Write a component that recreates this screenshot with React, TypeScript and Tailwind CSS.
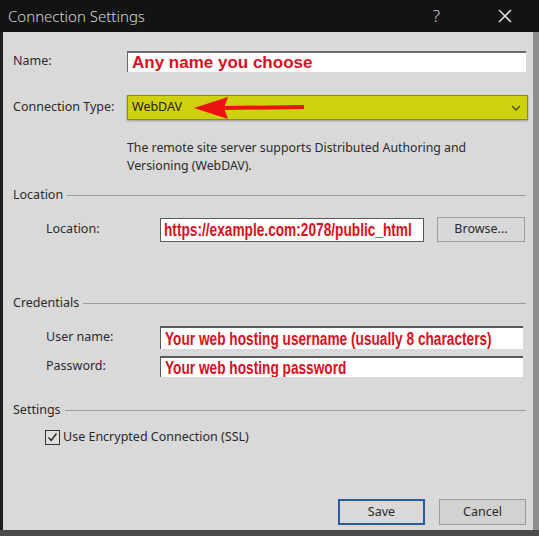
import React from 'react';

const ui = { fontFamily: '"Noto Sans", "Open Sans", sans-serif' };
const red = { fontFamily: '"Liberation Sans", Arial, sans-serif' };

const Legend: React.FC<{ title: string; className?: string }> = ({ title, className }) => (
    <div className={`flex items-center h-[18px] ${className ?? ''}`}>
        <span className="text-[12.5px] text-[#2a2a2a] pr-[4px]">{title}</span>
        <div className="flex-1 h-px bg-[#9c9c9c]" />
    </div>
);

// red annotation text typed over the fields, set narrow like Arial Narrow Bold
const Narrow: React.FC<{ children: React.ReactNode }> = ({ children }) => (
    <span className="text-[18px] font-bold text-[#d8101c] leading-none whitespace-nowrap origin-left scale-x-[0.76] inline-block" style={red}>
        {children}
    </span>
);

const App: React.FC = () => {
    return (
        <div className="w-[539px] h-[536px] bg-[#3c3c3c] flex flex-col overflow-hidden" style={ui}>
            <div className="h-[32px] bg-[#131313] flex items-center pl-[8px] text-[#d6d6d6] flex-shrink-0">
                <span className="text-[15px] font-light">Connection Settings</span>
                <span className="ml-auto text-[17px] font-light mr-[57px]">?</span>
                <svg width="16" height="16" viewBox="0 0 16 16" className="mr-[26px]">
                    <path d="M2 2 L14 14 M14 2 L2 14" stroke="#d6d6d6" strokeWidth="1.6" />
                </svg>
            </div>
            <div className="flex flex-1 min-h-0">
                <div className="w-[3px] bg-[#1e1e1e]" />
                <div className="flex-1 min-w-0 bg-[#d9d9d9] flex flex-col pl-[10px] pr-[7px] pt-[19px] pb-[5px]">
                    <div className="flex items-center">
                        <span className="w-[114px] text-[12.5px] text-[#2a2a2a]">Name:</span>
                        <div className="flex-1 min-w-0 h-[21px] bg-white border-t-2 border-l border-t-[#6a6a6a] border-l-[#6a6a6a] flex items-center pl-[4px] overflow-hidden">
                            <span className="text-[17px] font-bold text-[#d8101c] leading-none whitespace-nowrap" style={red}>Any name you choose</span>
                        </div>
                    </div>

                    <div className="flex items-center mt-[23px]">
                        <span className="w-[114px] text-[12.5px] text-[#2a2a2a]">Connection Type:</span>
                        <div className="relative flex-1 min-w-0 -mr-[2px] h-[25px] bg-[#cfd010] border border-[#8a8a20] flex items-center pl-[4px] shadow-[0_1px_2px_rgba(0,0,0,0.3)]">
                            <span className="text-[12.5px] text-[#242400]">WebDAV</span>
                            <svg width="112" height="24" viewBox="0 0 112 24" className="absolute left-[66px] top-0">
                                <path d="M30 10 L110 9 L110 13 L30 14 Z" fill="#ee1111" />
                                <path d="M0 12 L34 1 L30 12 L34 23 Z" fill="#ee1111" />
                            </svg>
                            <svg width="10" height="6" viewBox="0 0 10 6" className="ml-auto mr-[6px]">
                                <path d="M1 1 L5 5 L9 1" stroke="#4a4a20" strokeWidth="1.3" fill="none" />
                            </svg>
                        </div>
                    </div>

                    <p className="mt-[19px] pl-[114px] text-[12.3px] leading-[18px] text-[#2a2a2a]">
                        The remote site server supports Distributed Authoring and<br />Versioning (WebDAV).
                    </p>

                    <Legend title="Location" className="mt-[11px]" />

                    <div className="flex items-center mt-[13px] pl-[33px]">
                        <span className="w-[114px] text-[12.5px] text-[#2a2a2a]">Location:</span>
                        <div className="w-[264px] h-[24px] bg-white border border-[#5a5a5a] flex items-center pl-[3px] overflow-hidden">
                            <Narrow>https://example.com:2078/public_html</Narrow>
                        </div>
                        <button className="ml-[13px] w-[88px] h-[25px] bg-[#d8d8d8] border border-[#9c9c9c] text-[12.5px] text-[#2a2a2a]">Browse...</button>
                    </div>

                    <Legend title="Credentials" className="mt-[52px]" />

                    <div className="flex items-center mt-[14px] pl-[33px] pr-[3px]">
                        <span className="w-[114px] text-[12.5px] text-[#2a2a2a]">User name:</span>
                        <div className="flex-1 min-w-0 h-[23px] bg-white border-t-2 border-l border-t-[#5a5a5a] border-l-[#5a5a5a] flex items-center pl-[4px] overflow-hidden">
                            <Narrow>Your web hosting username (usually 8 characters)</Narrow>
                        </div>
                    </div>
                    <div className="flex items-center mt-[7px] pl-[33px] pr-[3px]">
                        <span className="w-[114px] text-[12.5px] text-[#2a2a2a]">Password:</span>
                        <div className="flex-1 min-w-0 h-[21px] bg-white border-t-2 border-l border-t-[#5a5a5a] border-l-[#5a5a5a] flex items-center pl-[4px] overflow-hidden">
                            <Narrow>Your web hosting password</Narrow>
                        </div>
                    </div>

                    <Legend title="Settings" className="mt-[24px]" />

                    <div className="flex items-center mt-[9px] pl-[32px]">
                        <div className="w-[15px] h-[15px] border border-[#333] bg-[#dedede] flex items-center justify-center">
                            <svg width="11" height="11" viewBox="0 0 11 11">
                                <path d="M1.5 5.5 L4.2 8.5 L9.5 1.5" stroke="#222" strokeWidth="1.4" fill="none" />
                            </svg>
                        </div>
                        <span className="ml-[3px] text-[12.5px] text-[#2a2a2a]">Use Encrypted Connection (SSL)</span>
                    </div>

                    <div className="mt-auto flex justify-end gap-[14px]">
                        <button className="w-[87px] h-[26px] bg-[#d9d9d9] border-2 border-[#2c5a9c] text-[12.5px] text-[#2a2a2a]">Save</button>
                        <button className="w-[87px] h-[26px] bg-[#d2d2d2] border border-[#9c9c9c] text-[12.5px] text-[#2a2a2a]">Cancel</button>
                    </div>
                </div>
                <div className="w-[6px] bg-[#8e8e8e]" />
            </div>
            <div className="h-[6px] bg-[#4a4a4a] flex-shrink-0" />
        </div>
    );
};

export default App;
